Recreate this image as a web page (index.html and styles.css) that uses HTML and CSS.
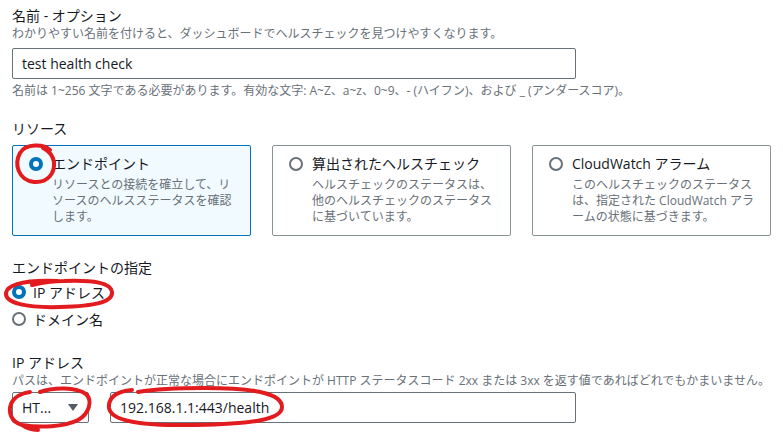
FILE: index.html
```html
<!DOCTYPE html>
<html lang="ja">
<head>
    <meta charset="UTF-8">
    <meta name="viewport" content="width=device-width, initial-scale=1.0">
    <title>ヘルスチェックの設定</title>
    <link rel="stylesheet" href="styles.css">
</head>
<body>
    <div class="form">
        <div class="field">
            <div class="label">名前 - オプション</div>
            <div class="desc">わかりやすい名前を付けると、ダッシュボードでヘルスチェックを見つけやすくなります。</div>
            <div class="input name-input">test health check</div>
            <div class="constraint">名前は 1~256 文字である必要があります。有効な文字: A~Z、a~z、0~9、- (ハイフン)、および _ (アンダースコア)。</div>
        </div>

        <div class="field resource">
            <div class="label">リソース</div>
            <div class="tiles">
                <div class="tile selected">
                    <span class="radio checked"></span>
                    <div class="tile-body">
                        <div class="tile-title">エンドポイント</div>
                        <div class="tile-desc">リソースとの接続を確立して、リ<br>ソースのヘルスステータスを確認<br>します。</div>
                    </div>
                </div>
                <div class="tile">
                    <span class="radio"></span>
                    <div class="tile-body">
                        <div class="tile-title">算出されたヘルスチェック</div>
                        <div class="tile-desc">ヘルスチェックのステータスは、<br>他のヘルスチェックのステータス<br>に基づいています。</div>
                    </div>
                </div>
                <div class="tile">
                    <span class="radio"></span>
                    <div class="tile-body">
                        <div class="tile-title">CloudWatch アラーム</div>
                        <div class="tile-desc">このヘルスチェックのステータス<br>は、指定された CloudWatch アラ<br>ームの状態に基づきます。</div>
                    </div>
                </div>
            </div>
        </div>

        <div class="field target">
            <div class="label">エンドポイントの指定</div>
            <div class="radio-row"><span class="radio checked"></span>IP アドレス</div>
            <div class="radio-row"><span class="radio"></span>ドメイン名</div>
        </div>

        <div class="field address">
            <div class="label">IP アドレス</div>
            <div class="desc">パスは、エンドポイントが正常な場合にエンドポイントが HTTP ステータスコード 2xx または 3xx を返す値であればどれでもかまいません。</div>
            <div class="address-row">
                <div class="input select">HT...<span class="caret"></span></div>
                <div class="input url-input">192.168.1.1:443/health</div>
            </div>
        </div>
    </div>

    <!-- red hand-drawn marks over the screenshot -->
    <svg class="marks" width="783" height="434" viewBox="0 0 783 434">
        <path d="M50 150 C44 144 26 143 20 153 C14 164 18 180 34 182 C48 183 55 173 54 162 C53 156 49 151 43 148" />
        <path d="M58 281 C30 280 8 283 6 293 C5 303 26 308 60 307 C96 306 113 302 112 292 C111 283 94 280 64 281 C50 281 40 283 32 285" />
        <path d="M40 392 C54 387 76 387 86 394 C93 401 89 414 78 420 C64 427 40 428 22 425 C11 422 8 412 11 404 C14 397 22 393 30 392 M22 425 C26 428 32 430 38 430" />
        <path d="M132 390 C116 391 108 398 109 408 C111 421 140 426 196 425 C250 424 282 420 282 407 C282 394 258 388 204 388 C172 388 150 390 138 392" />
    </svg>
</body>
</html>
```

FILE: styles.css
```css
body { margin: 0; font-family: "Open Sans", "Noto Sans CJK JP", sans-serif; color: #16191f; background: #fff; }
.form { padding: 6px 12px 0 12px; }
.label { font-size: 14px; line-height: 20px; }
.desc { font-size: 12px; line-height: 16px; color: #687078; white-space: nowrap; }
.constraint { font-size: 12px; line-height: 16px; color: #687078; margin-top: 4px; white-space: nowrap; }
.input { box-sizing: border-box; height: 31px; border: 1px solid #687078; border-radius: 2px; font-size: 14px; line-height: 29px; padding: 0 9px; margin-top: 6px; }
.name-input { width: 564px; }

.resource { margin-top: 20px; }
.tiles { display: flex; gap: 21px; margin-top: 6px; }
.tile { box-sizing: border-box; width: 239px; height: 91px; border: 1px solid #879596; border-radius: 2px; display: flex; gap: 9px; padding: 8px 12px 0 16px; }
.tile.selected { border-color: #0073bb; background: #f1faff; }
.tile .radio { margin-top: 3px; }
.tile-title { font-size: 14px; line-height: 20px; white-space: nowrap; }
.tile-desc { font-size: 12px; line-height: 16px; color: #687078; margin-top: 3px; white-space: nowrap; }

.radio { box-sizing: border-box; flex: none; display: inline-block; width: 14px; height: 14px; border: 2px solid #687078; border-radius: 50%; background: #fff; }
.radio.checked { border: 4.5px solid #0073bb; }

.target { margin-top: 22px; }
.radio-row { display: flex; align-items: center; gap: 7px; height: 27px; font-size: 14px; }
.radio-row:first-of-type { margin-top: 1px; }

.address { margin-top: 21px; }
.address-row { display: flex; gap: 21px; margin-top: 3px; }
.address-row .input { margin-top: 0; }
.select { width: 77px; display: flex; justify-content: space-between; align-items: center; }
.caret { width: 0; height: 0; border-left: 5px solid transparent; border-right: 5px solid transparent; border-top: 7px solid #545b64; margin-right: 1px; }
.url-input { width: 466px; }

.marks { position: absolute; top: 0; left: 0; pointer-events: none; }
.marks path { fill: none; stroke: #e21b1f; stroke-width: 4; stroke-linecap: round; stroke-linejoin: round; }
```
